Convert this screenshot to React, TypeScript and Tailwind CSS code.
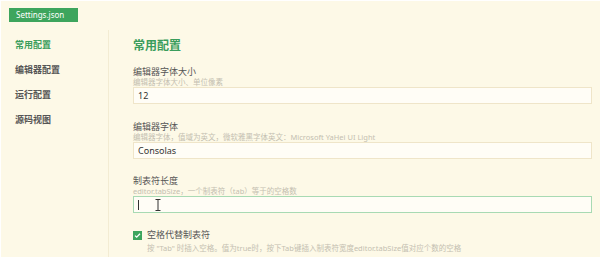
const menu = ['常用配置', '编辑器配置', '运行配置', '源码视图'];

function Field({
  label,
  desc,
  value,
  focused,
  className,
}: {
  label: string;
  desc: string;
  value?: string;
  focused?: boolean;
  className?: string;
}) {
  return (
    <div className={className}>
      <div className="h-[12px] leading-[12px] text-[9px] text-[#555]">{label}</div>
      <div className="h-[9px] leading-[9px] text-[7.5px] text-[#c4bfb1] whitespace-nowrap">{desc}</div>
      <div
        className={`relative h-[17px] w-[459px] bg-[#fffdf6] border flex items-center pl-[4px] text-[9px] text-[#333] ${
          focused ? 'border-[#a8dab3]' : 'border-[#efe5c9]'
        }`}
      >
        {value}
        {focused && (
          <>
            <span className="block w-[1px] h-[10px] bg-[#333]" />
            <svg className="absolute left-[21px] top-[2px]" width="6" height="12" viewBox="0 0 6 12">
              <path d="M0.5 0.5h5M3 0.5v11M0.5 11.5h5" stroke="#333" strokeWidth="1" fill="none" />
            </svg>
          </>
        )}
      </div>
    </div>
  );
}

export default function App() {
  return (
    <div
      className="w-[600px] h-[261px] bg-white overflow-hidden"
      style={{ fontFamily: '"Noto Sans", "Noto Sans CJK SC", sans-serif' }}
    >
      <div className="ml-[1px] mt-[1px] h-[256px] bg-[#fdf9e7] flex flex-col">
        <div className="h-[29px] pl-[8px] pt-[7px]">
          <div className="w-[69px] h-[14px] bg-[#3da55d] text-white text-[8px] leading-[14px] pl-[7px]">
            Settings.json
          </div>
        </div>
        <div className="flex flex-1">
          <div className="w-[108px] border-r border-[#f3ecd3] pt-[2px] pl-[14px]">
            {menu.map((m, i) => (
              <div
                key={m}
                className={`h-[25px] flex items-center text-[9px] font-bold ${
                  i === 0 ? 'text-[#3a9d5c]' : 'text-[#555]'
                }`}
              >
                {m}
              </div>
            ))}
          </div>
          <div className="flex-1 pl-[24px] pt-[8px]">
            <div className="h-[16px] leading-[16px] text-[12px] font-bold text-[#3a9d5c]">常用配置</div>
            <Field className="mt-[12px]" label="编辑器字体大小" desc="编辑器字体大小、单位像素" value="12" />
            <Field
              className="mt-[17px]"
              label="编辑器字体"
              desc="编辑器字体，值域为英文，微软雅黑字体英文：Microsoft YaHei UI Light"
              value="Consolas"
            />
            <Field
              className="mt-[16px]"
              label="制表符长度"
              desc="editor.tabSize，一个制表符（tab）等于的空格数"
              focused
            />
            <div className="mt-[16px] h-[12px] flex items-center gap-[5px]">
              <span className="w-[9px] h-[9px] bg-[#3da55d] flex items-center justify-center">
                <svg width="7" height="7" viewBox="0 0 7 7">
                  <path d="M1 3.6l1.7 1.6L6 1.8" stroke="#fff" strokeWidth="1.3" fill="none" />
                </svg>
              </span>
              <span className="text-[9px] text-[#555] leading-[12px]">空格代替制表符</span>
            </div>
            <div className="mt-[2px] pl-[14px] h-[10px] leading-[10px] text-[7.5px] text-[#c4bfb1] whitespace-nowrap">
              按 "Tab" 时插入空格。值为true时，按下Tab键插入制表符宽度editor.tabSize值对应个数的空格
            </div>
          </div>
        </div>
      </div>
    </div>
  );
}
